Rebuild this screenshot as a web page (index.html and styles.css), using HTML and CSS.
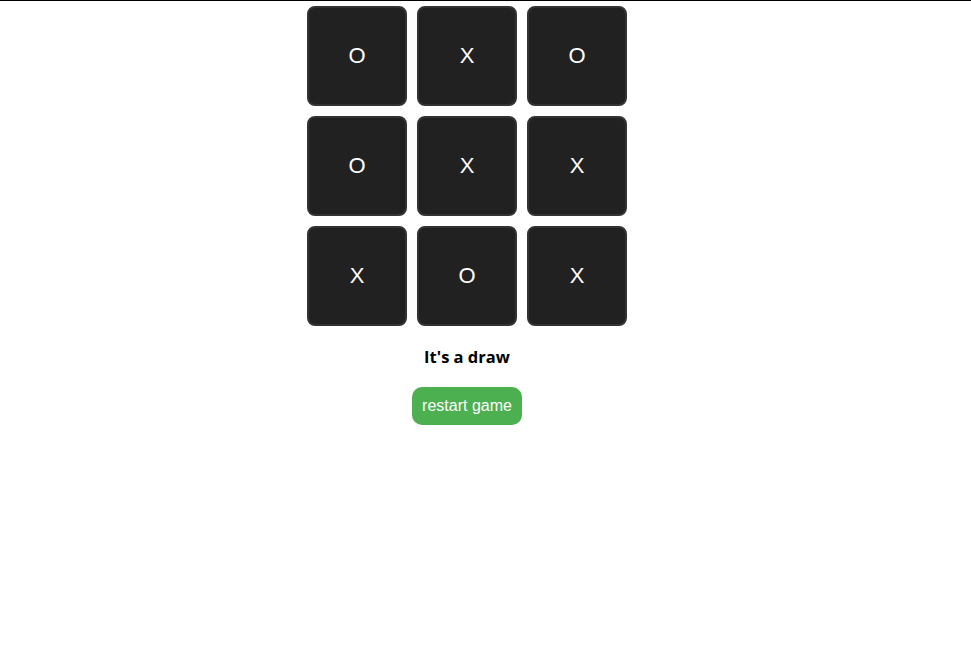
FILE: index.html
```html
<!DOCTYPE html>
<html>
<head>
<meta charset="utf-8">
<link rel="stylesheet" href="styles.css">
</head>
<body>
<div class="app">
  <div class="board">
    <div class="cell">O</div>
    <div class="cell">X</div>
    <div class="cell">O</div>
    <div class="cell">O</div>
    <div class="cell">X</div>
    <div class="cell">X</div>
    <div class="cell">X</div>
    <div class="cell">O</div>
    <div class="cell">X</div>
  </div>
  <div class="status">It's a draw</div>
  <button class="restart">restart game</button>
</div>
</body>
</html>
```
FILE: styles.css
```css
html, body {
  margin: 0;
  padding: 0;
  background: #fff;
}
body {
  border-top: 1px solid #000;
}
.app {
  width: 934px;
  padding-top: 5px;
  display: flex;
  flex-direction: column;
  align-items: center;
  font-family: "Liberation Sans", Arial, sans-serif;
}
.board {
  display: grid;
  grid-template-columns: repeat(3, 100px);
  grid-auto-rows: 100px;
  gap: 10px;
}
.cell {
  box-sizing: border-box;
  background: #212121;
  border: 2px solid #333;
  border-radius: 8px;
  color: #fff;
  font-size: 22px;
  display: flex;
  align-items: center;
  justify-content: center;
}
.status {
  margin-top: 20px;
  font-family: "Open Sans", "DejaVu Sans", sans-serif;
  font-weight: bold;
  font-size: 16.5px;
  line-height: 22px;
  color: #000;
}
.restart {
  margin-top: 19px;
  width: 110px;
  height: 38px;
  border: none;
  border-radius: 10px;
  background: #4caf50;
  color: #fff;
  font-family: "Liberation Sans", Arial, sans-serif;
  font-size: 16px;
  padding: 0;
}
```
